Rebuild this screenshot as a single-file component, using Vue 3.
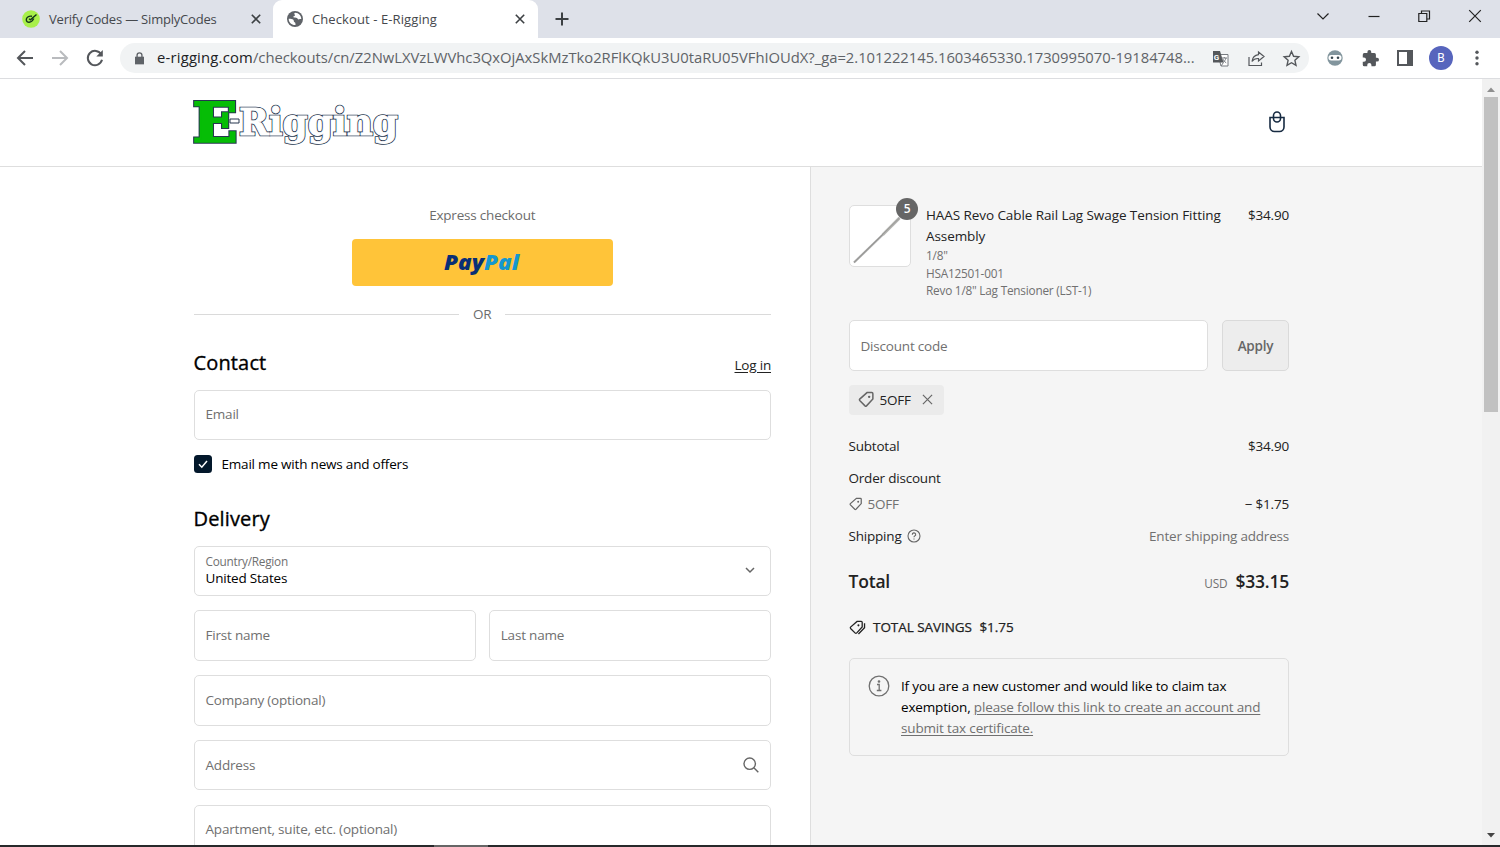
<template>
  <div class="browser">
    <div class="tabs">
      <div class="tab first">
        <svg class="favicon" viewBox="0 0 18 18">
          <circle cx="9" cy="9" r="8.8" fill="#a8f04a" />
          <path d="M10 6.200C6.500 5.600 4.200 7.600 4.300 9.800c.1 1.700 1.300 2.600 2.900 2.500 2.300-.1 3.500-1.600 4.600-3.800M7 8.800l1.400 1L14.500 4.500" fill="none" stroke="#12351b" stroke-width="1.400" />
        </svg>
        <span class="tab-title">Verify Codes — SimplyCodes</span>
        <svg class="tab-x" viewBox="0 0 10 10"><path d="M.8.8l8.400 8.400M9.200.8L.8 9.200" /></svg>
      </div>
      <div class="tab active">
        <svg class="favicon globe" viewBox="0 0 16 16">
          <circle cx="8" cy="8" r="8" fill="#5f6368" />
          <path d="M1.700 7.800c1.900.1 3.800.1 4.600.9.9.9.1 1.900 1.200 2.500.9.4 1.100 1.100 1 2.900-3.600.3-7-2.600-6.800-6.300zM8 1.700c-.9.7-1 1.400-.3 1.900.7.5.1 1.500-.9 1.700-.8.2-.6 1.200.3 1.300 1.300.1 2.800-.1 3.400 1 .5 1 1.500 1.100 2.300.5.500-.3 1.200-.3 1.500 0 .1-3.400-2.500-6.500-6.300-6.400z" fill="#fff" />
        </svg>
        <span class="tab-title">Checkout - E-Rigging</span>
        <svg class="tab-x" viewBox="0 0 10 10"><path d="M.8.8l8.400 8.400M9.200.8L.8 9.200" /></svg>
      </div>
      <svg class="new-tab" viewBox="0 0 14 14"><path d="M7 .5v13M.5 7h13" /></svg>
      <div class="window-buttons">
        <svg viewBox="0 0 14 14"><path d="M1.500 4.500L7 10l5.500-5.500" /></svg>
        <svg viewBox="0 0 14 14"><path d="M1.500 7.500h11" /></svg>
        <svg viewBox="0 0 14 14"><path d="M1.800 4.500h8v8h-8zM4.500 4.500V2h8v8H10" /></svg>
        <svg viewBox="0 0 14 14"><path d="M1.200 1.200l11.600 11.600M12.800 1.200L1.200 12.800" /></svg>
      </div>
    </div>

    <div class="toolbar">
      <svg class="nav" viewBox="0 0 18 18"><path d="M17 9H2.500M9 2L2 9l7 7" /></svg>
      <svg class="nav off" viewBox="0 0 18 18"><path d="M1 9h14.500M9 2l7 7-7 7" /></svg>
      <svg class="nav" viewBox="0 0 18 18"><path d="M15.300 5.500A7.200 7.200 0 1 0 16 10.800" /><path d="M16.800 1v6.500h-6.500z" fill="#54575b" stroke="none" /></svg>
      <div class="omnibox">
        <svg class="lock" viewBox="0 0 10 14"><path d="M0 5h10v8.500H0z" fill="#5f6368" /><path d="M2.300 6V3.500a2.700 2.700 0 0 1 5.400 0V6" fill="none" stroke="#5f6368" stroke-width="1.500" /></svg>
        <span class="url"><b>e-rigging.com</b>/checkouts/cn/Z2NwLXVzLWVhc3QxOjAxSkMzTko2RFlKQkU3U0taRU05VFhIOUdX?_ga=2.101222145.1603465330.1730995070-19184748...</span>
        <svg class="translate" viewBox="0 0 17 17">
          <path d="M6 4.500h10v11.500H9z" fill="#fff" stroke="#777b80" />
          <path d="M1 1h7l3.500 11.500H1z" fill="#54575b" />
          <text x="1.700" y="9.500">G</text>
          <path d="M9.500 8h5.500M12.300 7v1M14 8c-.6 2-1.600 3.500-3.300 4.700M10.800 9c.8 1.700 1.800 2.900 3.400 3.800M9 16l2.500-3.500" fill="none" stroke="#777b80" />
        </svg>
        <svg class="share" viewBox="0 0 17 17"><path d="M1 7v8.500h12.500V12.500M10.500 2l5.500 4.500-5.500 4.500V8.500C7.500 8.300 5.500 9.200 4 11.500c.4-3.600 2.500-6.200 6.500-6.800z" /></svg>
        <svg class="star" viewBox="0 0 17 17"><path d="M8.500 1.500l2.100 4.800 5.200.5-3.900 3.500 1.100 5.100-4.500-2.700L4 15.400l1.100-5.100-3.900-3.500 5.200-.5z" /></svg>
      </div>
      <div class="extensions">
        <svg class="e1" viewBox="0 0 16 16"><circle cx="8" cy="8" r="7.700" fill="#82959d" /><rect x="1.500" y="5" width="13" height="5.500" rx="2.700" fill="#fff" /><circle cx="5" cy="7.700" r="1.300" fill="#37474f" /><circle cx="11" cy="7.700" r="1.300" fill="#37474f" /></svg>
        <svg class="e2" viewBox="1 1 22 22"><path d="M20.500 11H19V7a2 2 0 0 0-2-2h-4V3.500a2.500 2.500 0 0 0-5 0V5H4a2 2 0 0 0-2 2v3.800h1.500a2.700 2.700 0 0 1 0 5.400H2V20a2 2 0 0 0 2 2h3.800v-1.500a2.700 2.700 0 0 1 5.400 0V22H17a2 2 0 0 0 2-2v-4h1.500a2.500 2.500 0 0 0 0-5z" fill="#54575b" /></svg>
        <svg class="e3" viewBox="0 0 16 16"><path d="M1 1h14v14H1z" fill="#fff" stroke="#54575b" stroke-width="2" /><path d="M10 1h5v14h-5z" fill="#54575b" /></svg>
        <span class="avatar">B</span>
        <svg class="e5" viewBox="0 0 4 16"><circle cx="2" cy="2.300" r="1.700" /><circle cx="2" cy="8" r="1.700" /><circle cx="2" cy="13.700" r="1.700" /></svg>
      </div>
    </div>

    <div class="viewport">
      <div class="page">
        <header class="site-header">
          <!-- each word is drawn twice: a wide dark outline, then the face over it -->
          <svg class="logo" viewBox="0 0 208 50">
            <g class="outline">
              <text class="logo-e" x="0.500" y="43.500" textLength="45" lengthAdjust="spacingAndGlyphs">E</text>
              <text class="logo-rest" x="47" y="37" textLength="159" lengthAdjust="spacingAndGlyphs">Rigging</text>
            </g>
            <text class="logo-e face" x="0.500" y="43.500" textLength="45" lengthAdjust="spacingAndGlyphs" aria-hidden="true">E</text>
            <text class="logo-rest face" x="47" y="37" textLength="159" lengthAdjust="spacingAndGlyphs" aria-hidden="true">Rigging</text>
            <path d="M38 21h9v4H38z" fill="#fff" stroke="#26364f" />
          </svg>
          <svg class="bag" viewBox="0 0 18 24"><path d="M2 7.500h14v9.500a4.500 4.500 0 0 1-4.500 4.500h-5A4.500 4.500 0 0 1 2 17z" /><rect x="5.500" y="2" width="7" height="10" rx="3.500" /></svg>
        </header>

        <div class="columns">
          <main class="form">
            <p class="express">Express checkout</p>
            <button class="paypal">
              <svg viewBox="0 0 76 24"><text x="0" y="19.500" textLength="75" lengthAdjust="spacingAndGlyphs">Pay<tspan>Pal</tspan></text></svg>
            </button>
            <div class="or"><span>OR</span></div>

            <div class="section-head contact">
              <h2>Contact</h2>
              <a class="login">Log in</a>
            </div>
            <div class="field"><span class="ph">Email</span></div>
            <label class="news">
              <svg viewBox="0 0 18 18"><rect width="18" height="18" rx="3.500" fill="#03182b" /><path d="M5 9.300l2.800 2.900L13 6" fill="none" stroke="#fff" stroke-width="1.500" /></svg>
              <span>Email me with news and offers</span>
            </label>

            <div class="section-head delivery"><h2>Delivery</h2></div>
            <div class="fields">
              <div class="field country">
                <div>
                  <small>Country/Region</small>
                  <span class="value">United States</span>
                </div>
                <svg class="chev" viewBox="0 0 12 12"><path d="M2 4l4 4 4-4" /></svg>
              </div>
              <div class="pair">
                <div class="field"><span class="ph">First name</span></div>
                <div class="field"><span class="ph">Last name</span></div>
              </div>
              <div class="field"><span class="ph">Company (optional)</span></div>
              <div class="field">
                <span class="ph">Address</span>
                <svg class="search" viewBox="0 0 16 16"><circle cx="6.700" cy="6.700" r="5.700" /><path d="M10.800 10.800L15.300 15.300" /></svg>
              </div>
              <div class="field last"><span class="ph">Apartment, suite, etc. (optional)</span></div>
            </div>
          </main>

          <aside class="summary">
            <div class="product">
              <div class="thumb">
                <svg viewBox="0 0 61 61"><path d="M4 57L34 28" stroke="#aaa" stroke-width="2.200" /><path d="M33 29L50 12" stroke="#b5b5b3" stroke-width="3" /><path d="M4 57L50 12" stroke="#898986" stroke-width=".7" /></svg>
                <span class="qty">5</span>
              </div>
              <div class="desc">
                <p class="name">HAAS Revo Cable Rail Lag Swage Tension Fitting<br>Assembly</p>
                <p v-for="line in details" :key="line" class="detail">{{ line }}</p>
              </div>
              <span class="price">$34.90</span>
            </div>

            <div class="discount">
              <div class="field"><span class="ph">Discount code</span></div>
              <button class="apply">Apply</button>
            </div>

            <div class="chip">
              <svg class="tag" viewBox="0 0 16 16"><path :d="tagPath" /><circle cx="10.500" cy="5.500" r="1.100" /></svg>
              <span>5OFF</span>
              <svg class="chip-x" viewBox="0 0 12 12"><path d="M1 1l10 10M11 1L1 11" /></svg>
            </div>

            <div class="row subtotal"><span>Subtotal</span><span class="price">$34.90</span></div>
            <div class="row order"><span>Order discount</span></div>
            <div class="row code">
              <span class="muted"><svg class="tag" viewBox="0 0 16 16"><path :d="tagPath" /><circle cx="10.500" cy="5.500" r="1.100" /></svg>5OFF</span>
              <span>− $1.75</span>
            </div>
            <div class="row shipping">
              <span>Shipping<svg class="help" viewBox="0 0 14 14"><circle cx="7" cy="7" r="6" /><path d="M5.300 5.700A1.700 1.700 0 1 1 7.700 7.100Q7 7.500 7 8.300M7 9.400v1.200" /></svg></span>
              <span class="muted">Enter shipping address</span>
            </div>
            <div class="row total">
              <strong>Total</strong>
              <span><small>USD</small><strong>$33.15</strong></span>
            </div>
            <div class="savings">
              <svg viewBox="0 0 18 16"><path :d="tagPath" /><path d="M16.500 3.500v4.800L10 15" /><circle cx="10" cy="5.700" r="1.100" /></svg>
              <span>TOTAL SAVINGS</span><span>$1.75</span>
            </div>

            <div class="notice">
              <svg viewBox="0 0 22 22"><circle cx="11" cy="11" r="9.800" /><path d="M9 9.500h2.200V15.500M8.800 15.500h4.600" /><circle cx="11" cy="6.500" r=".7" /></svg>
              <p>If you are a new customer and would like to claim tax<br>exemption, <a>please follow this link to create an account and</a><br><a>submit tax certificate.</a></p>
            </div>
          </aside>
        </div>
      </div>
      <div class="scrollbar">
        <svg viewBox="0 0 8 5"><path d="M0 5l4-4.500L8 5z" fill="#8f8f8f" /></svg>
        <div class="thumb-bar"></div>
        <svg viewBox="0 0 8 5"><path d="M0 0l4 4.500L8 0z" fill="#444" /></svg>
      </div>
    </div>
    <div class="taskbar"><div class="taskbar-item"></div></div>
  </div>
</template>

<script setup>
const details = ['1/8"', 'HSA12501-001', 'Revo 1/8" Lag Tensioner (LST-1)']

// shared outline of the discount tag icon
const tagPath = 'M8.500 1.500H13a1 1 0 0 1 1 1v5L8 14Q7.300 14.600 6.600 14L1.600 9Q1 8.300 1.600 7.600z'
</script>

<style>
body {
  overflow: hidden;
}
</style>

<style scoped>
.browser {
  width: 1500px;
  height: 847px;
  overflow: hidden;
  display: flex;
  flex-direction: column;
  background: #fff;
  font-family: "Open Sans", "Noto Sans", sans-serif;
  font-size: 13.5px;
  line-height: 21px;
  letter-spacing: -0.2px;
  color: #222;
}
* { box-sizing: border-box; }
p, h2 { margin: 0; }
svg { flex: none; display: block; fill: none; overflow: visible; }
button { font: inherit; letter-spacing: inherit; padding: 0; }

/* tab strip */
.tabs {
  height: 38px;
  flex: none;
  display: flex;
  align-items: center;
  background: #dee1e9;
}
.tab { display: flex; align-items: center; height: 38px; color: #45484d; }
.tab.first { width: 273px; padding: 0 12px 0 22px; }
.tab.active {
  width: 265px;
  padding: 0 13px 0 14px;
  background: #fff;
  border-radius: 9px 9px 0 0;
  letter-spacing: 0.1px;
}
.favicon { width: 18px; height: 18px; margin-right: 9px; }
.globe { width: 16px; height: 16px; }
.tab-title { flex: 1; white-space: nowrap; font-size: 13px; }
.tab-x { width: 10px; height: 10px; stroke: #3c4043; stroke-width: 1.6; }
.new-tab { width: 14px; height: 14px; margin-left: 17px; stroke: #3c4043; stroke-width: 2; }
.window-buttons { margin-left: auto; display: flex; gap: 36.7px; padding: 0 18px 6px 0; }
.window-buttons svg { width: 14px; height: 14px; stroke: #222; stroke-width: 1.2; }

/* toolbar */
.toolbar {
  height: 41px;
  flex: none;
  display: flex;
  align-items: center;
  padding-left: 16px;
  border-bottom: 1px solid #dcdde0;
}
.nav { width: 18px; height: 18px; margin-right: 17px; stroke: #54575b; stroke-width: 2; }
.nav.off { stroke: #b9bbbe; }
.omnibox {
  width: 1189px;
  height: 30px;
  margin-left: -1px;
  padding-left: 15px;
  border-radius: 15px;
  background: #f1f3f4;
  display: flex;
  align-items: center;
}
.lock { width: 9px; height: 13px; margin-right: 13px; }
.url {
  width: 1039.5px;
  padding-bottom: 1px;
  white-space: nowrap;
  font-size: 14.8px;
  letter-spacing: -0.02px;
  color: #5f6368;
}
.url b { font-weight: 400; letter-spacing: 0.2px; color: #202124; }
.translate { width: 17px; height: 17px; margin-left: 15px; }
.translate text { font: bold 8px Roboto, sans-serif; fill: #fff; }
.share, .star { width: 17px; height: 17px; stroke: #54575b; stroke-width: 1.4; margin-left: 19px; }
.share { stroke-width: 1.2; }
.star { margin-left: 18px; }
.extensions { display: flex; align-items: center; padding-left: 18px; }
.e1 { width: 16px; height: 16px; }
.e2 { width: 17px; height: 17px; margin-left: 19px; }
.e3 { width: 16px; height: 16px; margin-left: 18px; }
.avatar {
  width: 24px;
  height: 24px;
  margin-left: 16px;
  border-radius: 50%;
  background: #5765bd;
  color: #fff;
  font: 12px/24px Roboto, sans-serif;
  text-align: center;
}
.e5 { width: 4px; height: 16px; margin-left: 22px; fill: #54575b; }

/* page */
.viewport { height: 766px; flex: none; display: flex; overflow: hidden; }
.page { width: 1482px; }
.site-header {
  height: 88px;
  display: flex;
  justify-content: space-between;
  align-items: center;
  padding: 0 196px 0 192px;
  border-bottom: 1px solid #dedede;
}
.logo { width: 208px; height: 50px; }
.logo text { font-family: "DejaVu Serif", serif; font-weight: bold; letter-spacing: 0; }
.logo-e { font-size: 55px; }
.logo-rest { font-size: 38px; }
.outline { fill: #26364f; stroke: #26364f; stroke-width: 2.6px; }
.outline .logo-e { stroke-width: 4px; }
.logo-e.face { fill: #06bd06; stroke: #06bd06; stroke-width: 2px; }
.logo-rest.face { fill: #fff; stroke: #fff; stroke-width: 0.8px; }
.bag { width: 18px; height: 24px; margin-bottom: 1px; stroke: #172b42; stroke-width: 1.6; }
.columns { display: flex; height: 700px; }
.form { width: 811px; padding: 37.5px 39px 0 193.5px; border-right: 1px solid #dedede; }
.express { text-align: center; color: #6c6c6c; }
.paypal {
  display: flex;
  align-items: center;
  justify-content: center;
  width: 261px;
  height: 47.5px;
  margin: 13px auto 0;
  border: 0;
  border-radius: 4px;
  background: #ffc439;
}
.paypal svg { width: 76px; height: 24px; }
.paypal text {
  font: italic 800 21.5px "Open Sans", sans-serif;
  letter-spacing: 0;
  fill: #082f75;
}
.paypal tspan { fill: #1497cf; }
.or { display: flex; align-items: center; gap: 14px; margin-top: 18px; color: #6c6c6c; }
.or::before, .or::after { content: ""; flex: 1; height: 1px; background: #dadada; }
.section-head { display: flex; justify-content: space-between; align-items: center; height: 28px; }
h2 {
  font-size: 20px;
  line-height: 28px;
  font-weight: 400;
  letter-spacing: 0.15px;
  color: #000;
  -webkit-text-stroke: 0.35px #000;
}
.contact { margin-top: 23.5px; }
.login { padding-top: 5px; color: #222; text-decoration: underline; text-underline-offset: 2px; }
.field {
  height: 50.5px;
  padding: 0 11px;
  display: flex;
  align-items: center;
  justify-content: space-between;
  background: #fff;
  border: 1px solid #dedede;
  border-radius: 5px;
}
.contact + .field { margin-top: 13px; padding-bottom: 1px; }
.ph, .muted { color: #707070; }
.news { display: flex; align-items: center; gap: 9.5px; margin: 13.5px 0 0 0.5px; color: #000; }
.news svg { width: 18px; height: 18px; }
.delivery { margin-top: 30.5px; }
.fields { display: flex; flex-direction: column; gap: 14.3px; margin-top: 12.5px; }
.country, .last { padding-bottom: 1px; }
.country small { display: block; font-size: 11.8px; line-height: 15px; letter-spacing: -0.25px; color: #707070; }
.value { display: block; line-height: 18px; color: #000; }
.chev { width: 12px; height: 12px; margin-right: 3px; stroke: #666; stroke-width: 1.5; }
.search { width: 16px; height: 16px; stroke: #666; stroke-width: 1.4; }
.pair { display: flex; gap: 13px; }
.pair .field { flex: 1; }

/* order summary */
.summary { width: 671px; padding: 38px 193px 0 37.5px; background: #f5f5f5; }
.product { display: flex; height: 115.3px; }
.thumb {
  position: relative;
  width: 62.5px;
  height: 62.2px;
  border: 1px solid #dedede;
  border-radius: 5px;
  background: #fff;
}
.qty {
  position: absolute;
  top: -8px;
  right: -8px;
  width: 22px;
  height: 22px;
  border-radius: 50%;
  background: #666;
  color: #fff;
  font-size: 12px;
  line-height: 22px;
  font-weight: 600;
  text-align: center;
}
.desc { flex: 1; padding-left: 15px; white-space: nowrap; }
.name { letter-spacing: -0.08px; }
.detail { font-size: 11.8px; line-height: 17.6px; letter-spacing: -0.22px; color: #707070; }
.discount { display: flex; gap: 14px; }
.discount .field { flex: 1; padding-top: 1px; }
.apply {
  width: 67px;
  padding-top: 1px;
  border: 1px solid #dadada;
  border-radius: 5px;
  background: #ededed;
  color: #666;
  font-weight: 600;
}
.chip {
  width: 95px;
  height: 30px;
  margin-top: 14.2px;
  padding-left: 9px;
  display: flex;
  align-items: center;
  border-radius: 4px;
  background: #ebebeb;
}
.chip span { padding-top: 2px; }
.tag { width: 17px; height: 17px; stroke: #666; stroke-width: 1.4; margin-right: 5px; }
.tag circle { fill: #666; stroke: none; }
.chip-x { width: 11px; height: 11px; stroke: #666; stroke-width: 1.3; margin-left: 11px; }
.row { display: flex; justify-content: space-between; height: 21px; }
.row > span { display: flex; align-items: center; }
.subtotal { margin-top: 21px; }
.order { margin-top: 11px; }
.code { margin-top: 5px; }
.code .tag { width: 14px; height: 14px; }
.shipping { margin-top: 11px; }
.help { width: 14px; height: 14px; margin-left: 5px; stroke: #666; stroke-width: 1.1; }
.total { margin-top: 24px; }
.total strong { font-size: 17.5px; font-weight: 600; }
.total small { font-size: 11.8px; color: #707070; margin: 4px 8px 0 0; }
.savings {
  display: flex;
  align-items: center;
  gap: 7.5px;
  margin-top: 25px;
  letter-spacing: -0.05px;
  -webkit-text-stroke: 0.25px #222;
}
.savings svg { width: 17px; height: 15px; stroke: #222; stroke-width: 1.4; }
.savings circle { fill: #222; stroke: none; }
.notice {
  height: 98px;
  margin-top: 20px;
  padding: 17px 18px;
  display: flex;
  gap: 11.5px;
  border: 1px solid #dedede;
  border-radius: 5px;
  color: #000;
  letter-spacing: -0.16px;
  white-space: nowrap;
}
.notice svg { width: 22px; height: 22px; margin-top: -0.5px; stroke: #707070; stroke-width: 1.3; }
.notice a { color: #707070; text-decoration: underline; text-underline-offset: 2px; }

.scrollbar {
  width: 18px;
  padding: 8px 0 7px;
  display: flex;
  flex-direction: column;
  align-items: center;
  background: #f1f1f1;
}
.scrollbar svg { width: 8px; height: 5px; }
.thumb-bar { width: 14px; height: 315px; margin: 5px 0 auto; background: #c1c1c1; }
.taskbar { height: 2px; flex: none; background: #27292b; }
.taskbar-item { width: 54px; height: 2px; margin-left: 434px; background: #666; }
</style>
